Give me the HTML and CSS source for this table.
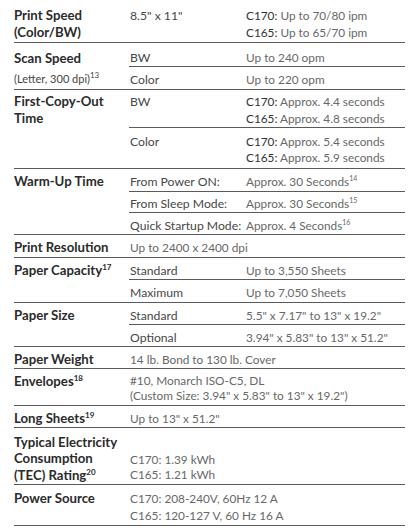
FILE: index.html
```html
<!DOCTYPE html>
<html lang="en">
<head>
<meta charset="utf-8">
<title>Specifications</title>
<link rel="stylesheet" href="styles.css">
</head>
<body>
<table class="spec">
  <colgroup><col class="c1"><col class="c2"><col class="c3"></colgroup>
  <tr class="h42 first">
    <th>Print Speed<br>(Color/BW)</th>
    <td class="sub">8.5" x 11"</td>
    <td><span class="m">C170:</span> Up to 70/80 ipm<br><span class="m">C165:</span> Up to 65/70 ipm</td>
  </tr>
  <tr class="h24 scan">
    <th rowspan="2">Scan Speed<br><span class="note">(Letter, 300 dpi)<sup>13</sup></span></th>
    <td class="sub">BW</td>
    <td>Up to 240 opm</td>
  </tr>
  <tr class="h23">
    <td class="sub">Color</td>
    <td>Up to 220 opm</td>
  </tr>
  <tr class="h38 fc">
    <th rowspan="2">First-Copy-Out<br>Time</th>
    <td class="sub">BW</td>
    <td><span class="m">C170:</span> Approx. 4.4 seconds<br><span class="m">C165:</span> Approx. 4.8 seconds</td>
  </tr>
  <tr class="h41 fc2">
    <td class="sub">Color</td>
    <td><span class="m">C170:</span> Approx. 5.4 seconds<br><span class="m">C165:</span> Approx. 5.9 seconds</td>
  </tr>
  <tr class="h23">
    <th rowspan="3">Warm-Up Time</th>
    <td class="sub">From Power ON:</td>
    <td>Approx. 30 Seconds<sup>14</sup></td>
  </tr>
  <tr class="h21 tight">
    <td class="sub">From Sleep Mode:</td>
    <td>Approx. 30 Seconds<sup>15</sup></td>
  </tr>
  <tr class="h22">
    <td class="sub">Quick Startup Mode:</td>
    <td>Approx. 4 Seconds<sup>16</sup></td>
  </tr>
  <tr class="h23">
    <th>Print Resolution</th>
    <td colspan="2">Up to 2400 x 2400 dpi</td>
  </tr>
  <tr class="h22">
    <th rowspan="2">Paper Capacity<sup>17</sup></th>
    <td class="sub">Standard</td>
    <td>Up to 3,550 Sheets</td>
  </tr>
  <tr class="h23">
    <td class="sub">Maximum</td>
    <td>Up to 7,050 Sheets</td>
  </tr>
  <tr class="h22">
    <th rowspan="2">Paper Size</th>
    <td class="sub">Standard</td>
    <td>5.5" x 7.17" to 13" x 19.2"</td>
  </tr>
  <tr class="h22">
    <td class="sub">Optional</td>
    <td>3.94" x 5.83" to 13" x 51.2"</td>
  </tr>
  <tr class="h22">
    <th>Paper Weight</th>
    <td colspan="2">14 lb. Bond to 130 lb. Cover</td>
  </tr>
  <tr class="h37 env">
    <th>Envelopes<sup>18</sup></th>
    <td colspan="2">#10, Monarch ISO-C5, DL<br>(Custom Size: 3.94" x 5.83" to 13" x 19.2")</td>
  </tr>
  <tr class="h22">
    <th>Long Sheets<sup>19</sup></th>
    <td colspan="2">Up to 13" x 51.2"</td>
  </tr>
  <tr class="h57 tec">
    <th>Typical Electricity<br>Consumption<br>(TEC) Rating<sup>20</sup></th>
    <td colspan="2" class="bottom">C170: 1.39 kWh<br>C165: 1.21 kWh</td>
  </tr>
  <tr class="h41 power">
    <th>Power Source</th>
    <td colspan="2">C170: 208-240V, 60Hz 12 A<br>C165: 120-127 V, 60 Hz 16 A</td>
  </tr>
</table>
</body>
</html>
```
FILE: styles.css
```css
html, body {
  margin: 0;
  padding: 0;
  background: #ffffff;
}
.spec {
  margin-left: 14px;
  width: 391px;
  border-collapse: collapse;
  table-layout: fixed;
  font-family: Lato, "Liberation Sans", sans-serif;
}
.c1 { width: 115px; }
.c2 { width: 116px; }
.c3 { width: 160px; }

.spec th,
.spec td {
  vertical-align: top;
  text-align: left;
  padding: 4px 0 0 1px;
  line-height: 17px;
  border-bottom: 1px solid #5a5a5a;
  white-space: nowrap;
}
.spec th {
  padding-left: 0;
  font-size: 13.2px;
  font-weight: 700;
  color: #2b2b2b;
}
.spec td {
  font-size: 11.8px;
  font-weight: 400;
  color: #686868;
}
.spec td.sub {
  font-size: 12.2px;
  color: #474747;
}
.spec .m {
  color: #333;
}
.spec sup {
  font-size: 7px;
  line-height: 0;
  vertical-align: 5px;
}
.spec th sup {
  font-size: 8px;
}
.note {
  font-size: 11px;
  font-weight: 400;
  color: #444;
}

.h21 { height: 21px; }
.h22 { height: 22px; }
.h23 { height: 23px; }
.h24 { height: 24px; }
.h37 { height: 37px; }
.h38 { height: 38px; }
.h41 { height: 41px; }
.h42 { height: 42px; }
.h57 { height: 57px; }

.first th, .first td { padding-top: 7px; line-height: 17px; }
.scan th { padding-top: 5px; line-height: 20px; }
.scan td { padding-top: 6px; }
.fc th, .fc td { padding-top: 3px; line-height: 17px; }
.fc2 td { padding-top: 6px; line-height: 16px; }
.tight td { padding-top: 3px; }
.env td { line-height: 15px; }
.tec th { line-height: 16.5px; padding-top: 6px; }
.tec td { vertical-align: bottom; line-height: 15px; padding-bottom: 2px; }
.power th, .power td { padding-top: 5px; line-height: 17px; }
```
